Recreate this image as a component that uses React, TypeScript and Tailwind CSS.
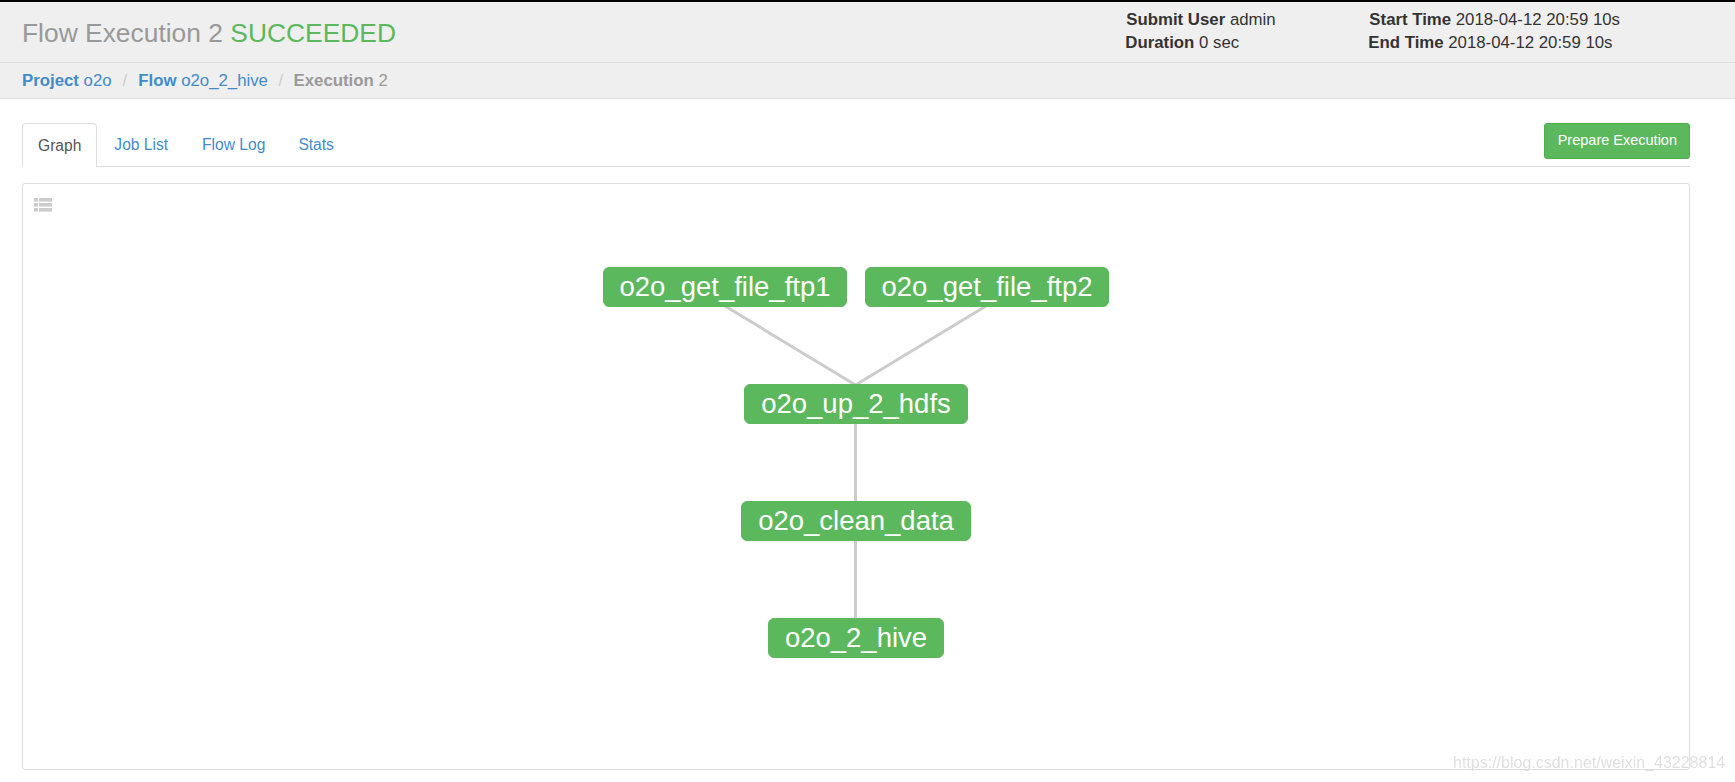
import React from "react";

interface FlowNode {
  label: string;
  left: number;
  top: number;
  width: number;
}

// Positions are relative to the graph panel
const nodes: FlowNode[] = [
  { label: "o2o_get_file_ftp1", left: 580, top: 83, width: 244 },
  { label: "o2o_get_file_ftp2", left: 842, top: 83, width: 244 },
  { label: "o2o_up_2_hdfs", left: 721, top: 200, width: 224 },
  { label: "o2o_clean_data", left: 718, top: 317, width: 230 },
  { label: "o2o_2_hive", left: 745, top: 434, width: 176 },
];

const MetaItem = ({ label, value, className }: { label: string; value: string; className?: string }) => (
  <div className={`whitespace-nowrap ${className ?? ""}`}>
    <span className="font-bold">{label}</span> {value}
  </div>
);

const App: React.FC = () => {
  return (
    <div className="relative h-[782px] w-[1735px] overflow-hidden bg-white font-['Liberation_Sans',Arial,sans-serif] text-[#333]">
      <div className="h-[2px] bg-black" />

      {/* Header */}
      <div className="flex h-[61px] items-center justify-between border-b border-[#ddd] bg-[#efefef] pl-[22px]">
        <h1 className="mt-[2px] text-[26.4px] leading-none font-normal text-[#999]">
          Flow Execution 2 <span className="text-[#5cb85c]">SUCCEEDED</span>
        </h1>
        <div className="mr-[115px] mb-[3px] flex text-[16.8px] leading-[23px]">
          <div className="w-[243px]">
            <MetaItem label="Submit User" value="admin" className="ml-[1px]" />
            <MetaItem label="Duration" value="0 sec" />
          </div>
          <div>
            <MetaItem label="Start Time" value="2018-04-12 20:59 10s" className="ml-[1px]" />
            <MetaItem label="End Time" value="2018-04-12 20:59 10s" />
          </div>
        </div>
      </div>

      {/* Breadcrumb */}
      <div className="flex h-[36px] items-center border-b border-[#ddd] bg-[#efefef] pl-[22px] text-[16.8px] text-[#999]">
        <a className="text-[#428bca]">
          <span className="font-bold">Project</span> o2o
        </a>
        <span className="mx-[11px] text-[#ccc]">/</span>
        <a className="text-[#428bca]">
          <span className="font-bold">Flow</span> o2o_2_hive
        </a>
        <span className="mx-[10.5px] text-[#ccc]">/</span>
        <span>
          <span className="font-bold">Execution</span> 2
        </span>
      </div>

      <div className="px-[22px] pt-[24px] pr-[45px]">
        {/* Tabs */}
        <div className="flex h-[44px] items-end justify-between border-b border-[#ddd]">
          <div className="-mb-px flex text-[15.6px] text-[#428bca]">
            <div className="flex h-[44px] items-center rounded-t-[4px] border border-b-0 border-[#ddd] bg-white px-[15px] text-[#555]">
              Graph
            </div>
            <div className="flex h-[44px] items-center px-[17px]">Job List</div>
            <div className="flex h-[44px] items-center px-[17px]">Flow Log</div>
            <div className="flex h-[44px] items-center px-[16px]">Stats</div>
          </div>
          <button className="mb-[7px] h-[36px] rounded-[3px] border border-[#4cae4c] bg-[#5cb85c] pr-[12px] pl-[12.5px] text-[14.5px] text-white">
            Prepare Execution
          </button>
        </div>

        {/* Graph panel */}
        <div className="relative mt-[16px] h-[587px] rounded-[3px] border border-[#ddd]">
          <svg
            className="absolute top-[14px] left-[11px]"
            width="18"
            height="14"
            viewBox="0 0 18 14"
            fill="#ccc"
          >
            <rect x="0" y="0" width="4" height="3.6" />
            <rect x="5" y="0" width="13" height="3.6" />
            <rect x="0" y="5" width="4" height="3.6" />
            <rect x="5" y="5" width="13" height="3.6" />
            <rect x="0" y="10" width="4" height="3.6" />
            <rect x="5" y="10" width="13" height="3.6" />
          </svg>

          <svg className="absolute inset-0" width="1666" height="585" fill="none" stroke="#ccc" strokeWidth="3">
            <line x1="702" y1="122" x2="832.5" y2="201" />
            <line x1="963" y1="122" x2="832.5" y2="201" />
            <line x1="832.5" y1="240" x2="832.5" y2="436" />
          </svg>

          {nodes.map((node) => (
            <div
              key={node.label}
              className="absolute flex h-[40px] items-center justify-center rounded-[6px] border border-[#5fb65f] bg-[#5cb85c] text-[27.5px] leading-none whitespace-nowrap text-white"
              style={{ left: node.left, top: node.top, width: node.width }}
            >
              {node.label}
            </div>
          ))}
        </div>
      </div>

      {/* Watermark */}
      <div className="absolute top-[755px] left-[1453px] text-[16px] leading-none whitespace-nowrap text-[#d8d8d8] opacity-80 blur-[0.4px]">
        https://blog.csdn.net/weixin_43228814
      </div>
    </div>
  );
};

export default App;
